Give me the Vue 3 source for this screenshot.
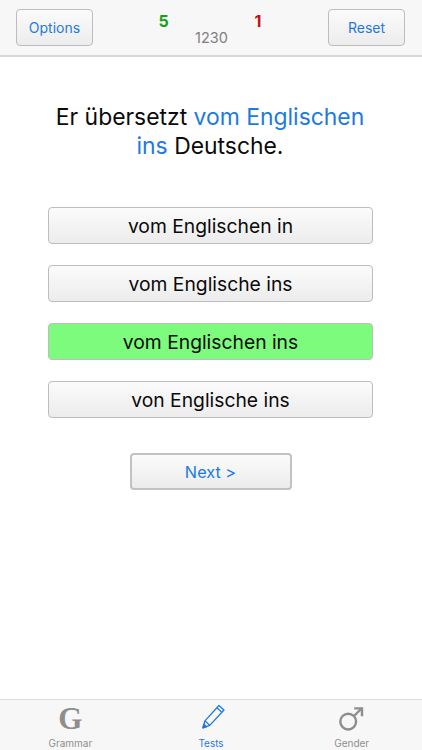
<script setup>
const answers = [
  { text: 'vom Englischen in' },
  { text: 'vom Englische ins' },
  { text: 'vom Englischen ins', correct: true },
  { text: 'von Englische ins' }
]
</script>

<template>
  <div class="screen">
    <header class="top">
      <button class="btn small">Options</button>
      <div class="score">
        <div class="counts">
          <span class="good">5</span>
          <span class="bad">1</span>
        </div>
        <div class="total">1230</div>
      </div>
      <button class="btn small">Reset</button>
    </header>

    <main class="body">
      <p class="question">Er übersetzt <span class="blue">vom Englischen<br>ins</span> Deutsche.</p>
      <div class="answers">
        <button v-for="a in answers" :key="a.text" class="btn answer" :class="{ correct: a.correct }">{{ a.text }}</button>
      </div>
      <button class="btn next">Next &gt;</button>
    </main>

    <nav class="tabs">
      <div class="tab">
        <span class="g">G</span>
        <span class="label">Grammar</span>
      </div>
      <div class="tab active">
        <svg class="icon pencil" width="26" height="26" viewBox="0 0 26 26" fill="none" stroke="#1f78e0" stroke-width="1.2" stroke-linejoin="round">
          <path d="M5.5 17.5 L18.5 3.2 L23.2 7.4 L10 21.7 L3.6 24 Z" />
          <path d="M16.6 5.3 L21.3 9.5" />
          <path d="M5.5 17.5 L10 21.7" />
          <path d="M3.6 24 L4.6 20.6 L7 22.9 Z" fill="#1f78e0" />
        </svg>
        <span class="label">Tests</span>
      </div>
      <div class="tab">
        <svg class="icon" width="26" height="26" viewBox="0 0 26 26" fill="none" stroke="#8e8e8e" stroke-width="2.4">
          <circle cx="10.2" cy="15.6" r="7.9" />
          <path d="M16 10 L23.5 2.5" />
          <path d="M16.2 2.4 H24 V10.2" />
        </svg>
        <span class="label">Gender</span>
      </div>
    </nav>
  </div>
</template>

<style scoped>
.screen {
  width: 422px;
  height: 750px;
  display: flex;
  flex-direction: column;
  background: #fff;
  font-family: Inter, "Liberation Sans", Arial, sans-serif;
  overflow: hidden;
}
.top {
  box-sizing: border-box;
  padding: 9px 17px 0 16px;
  display: flex;
  justify-content: space-between;
  align-items: flex-start;
  background: #f7f7f7;
  border-bottom: 2px solid #d8d8d8;
  flex: none;
  height: 57px;
}
.btn {
  display: block;
  box-sizing: border-box;
  padding: 0;
  font-family: inherit;
  border: 1.5px solid #bdbdbd;
  border-radius: 4px;
  background: linear-gradient(#fbfbfb, #ececec);
  color: #1d7ae2;
}
.small {
  width: 77px;
  height: 37px;
  font-size: 14px;
}
.score {
  width: 190px;
  flex: none;
}
.counts {
  display: flex;
  justify-content: space-between;
  padding: 3px 44px 0 43px;
  font-size: 16px;
  font-weight: 700;
  line-height: 19px;
}
.good { color: #17a015; }
.bad { color: #c0101c; }
.total {
  text-align: center;
  font-size: 14.5px;
  line-height: 17px;
  color: #808080;
  padding-left: 2px;
  margin-top: -2px;
}
.body {
  flex: 1;
  display: flex;
  flex-direction: column;
  align-items: center;
}
.question {
  margin: 46px 2px 0 0;
  font-size: 22.9px;
  line-height: 29px;
  text-align: center;
  color: #0a0a0a;
}
.blue { color: #1d7ae2; }
.answers {
  margin: 46px 1px 0 0;
  display: flex;
  flex-direction: column;
  gap: 21px;
}
.answer {
  width: 325px;
  height: 37px;
  font-size: 19.3px;
  color: #0a0a0a;
}
.correct {
  background: #7dfb7d;
}
.next {
  margin: 35px 1px 0 0;
  width: 162px;
  height: 37px;
  font-size: 16.3px;
  border-color: #c2c2c2;
  border-width: 2px;
}
.tabs {
  flex: none;
  height: 51px;
  box-sizing: border-box;
  display: grid;
  grid-template-columns: 1fr 1fr 1fr;
  background: #f7f7f7;
  border-top: 1px solid #dcdcdc;
}
.tab {
  display: flex;
  flex-direction: column;
  align-items: center;
  justify-content: flex-end;
  color: #8e8e8e;
}
.tab.active { color: #1f78e0; }
.icon { display: block; margin: 0 1px 4px 0; }
.pencil { margin: 0 -4px 6px 0; width: 28px; height: 28px; }
.g {
  font-family: "Liberation Serif", serif;
  font-weight: 700;
  font-size: 31px;
  line-height: 29px;
  color: #8e8e8e;
  margin-bottom: 3px;
  display: block;
}
.label {
  font-size: 10px;
  line-height: 14px;
  height: 14px;
}
</style>
